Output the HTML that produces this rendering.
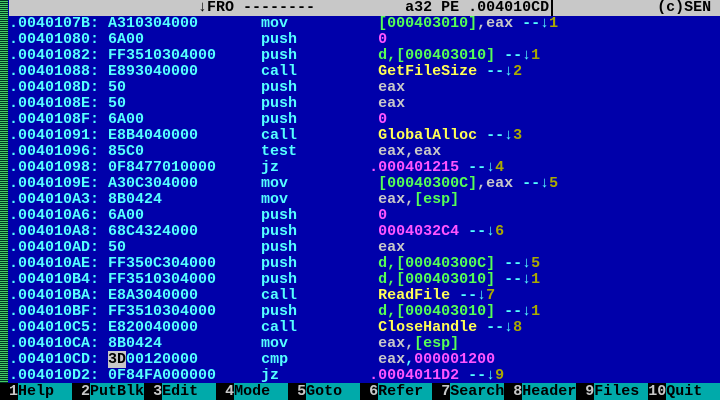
<!DOCTYPE html>
<html><head><meta charset="utf-8"><style>
html,body{margin:0;padding:0;width:720px;height:400px;overflow:hidden;background:#0000aa}
.r{position:absolute;left:0;width:720px;height:16px;white-space:pre;font:bold 15px/16px "Liberation Mono",monospace;color:#55ffff}
.c{color:#55ffff}.g{color:#55ff55}.w{color:#c8c8c8}.m{color:#ff55ff}.y{color:#ffff55}.o{color:#aaaa00}
.hl{background:#c8c8c8;color:#000}
#stripe{position:absolute;left:0;top:0;width:8px;height:384px;background:repeating-linear-gradient(0deg,#55ff55 0 1px,#004400 1px 2px);opacity:.8}
#top{position:absolute;left:9px;top:0;width:711px;height:16px;background:#c8c8c8}
#cur{position:absolute;left:551px;top:0;width:2px;height:16px;background:#000}
.k{background:#000;color:#c8c8c8}.f{background:#00aaaa;color:#000}
</style></head><body>
<div id="top"></div><div id="cur"></div><div id="stripe"></div>
<div class="r" style="top:0;color:#000">                      ↓FRO --------          a32 PE .004010CD            (c)SEN</div>
<div class="r" style="top:16px"> .0040107B: A310304000       mov          <span class="g">[000403010]</span><span class="w">,eax</span> --↓<span class="o">1</span></div>
<div class="r" style="top:32px"> .00401080: 6A00             push         <span class="m">0</span></div>
<div class="r" style="top:48px"> .00401082: FF3510304000     push         <span class="g">d,[000403010]</span> --↓<span class="o">1</span></div>
<div class="r" style="top:64px"> .00401088: E893040000       call         <span class="y">GetFileSize</span> --↓<span class="o">2</span></div>
<div class="r" style="top:80px"> .0040108D: 50               push         <span class="w">eax</span></div>
<div class="r" style="top:96px"> .0040108E: 50               push         <span class="w">eax</span></div>
<div class="r" style="top:112px"> .0040108F: 6A00             push         <span class="m">0</span></div>
<div class="r" style="top:128px"> .00401091: E8B4040000       call         <span class="y">GlobalAlloc</span> --↓<span class="o">3</span></div>
<div class="r" style="top:144px"> .00401096: 85C0             test         <span class="w">eax,eax</span></div>
<div class="r" style="top:160px"> .00401098: 0F8477010000     jz          <span class="m">.000401215</span> --↓<span class="o">4</span></div>
<div class="r" style="top:176px"> .0040109E: A30C304000       mov          <span class="g">[00040300C]</span><span class="w">,eax</span> --↓<span class="o">5</span></div>
<div class="r" style="top:192px"> .004010A3: 8B0424           mov          <span class="w">eax,</span><span class="g">[esp]</span></div>
<div class="r" style="top:208px"> .004010A6: 6A00             push         <span class="m">0</span></div>
<div class="r" style="top:224px"> .004010A8: 68C4324000       push         <span class="m">0004032C4</span> --↓<span class="o">6</span></div>
<div class="r" style="top:240px"> .004010AD: 50               push         <span class="w">eax</span></div>
<div class="r" style="top:256px"> .004010AE: FF350C304000     push         <span class="g">d,[00040300C]</span> --↓<span class="o">5</span></div>
<div class="r" style="top:272px"> .004010B4: FF3510304000     push         <span class="g">d,[000403010]</span> --↓<span class="o">1</span></div>
<div class="r" style="top:288px"> .004010BA: E8A3040000       call         <span class="y">ReadFile</span> --↓<span class="o">7</span></div>
<div class="r" style="top:304px"> .004010BF: FF3510304000     push         <span class="g">d,[000403010]</span> --↓<span class="o">1</span></div>
<div class="r" style="top:320px"> .004010C5: E820040000       call         <span class="y">CloseHandle</span> --↓<span class="o">8</span></div>
<div class="r" style="top:336px"> .004010CA: 8B0424           mov          <span class="w">eax,</span><span class="g">[esp]</span></div>
<div class="r" style="top:352px"> .004010CD: <span class="hl">3D</span>00120000       cmp          <span class="w">eax</span>,<span class="m">000001200</span></div>
<div class="r" style="top:368px"> .004010D2: 0F84FA000000     jz          <span class="m">.0004011D2</span> --↓<span class="o">9</span></div>
<div class="r" style="top:384px"><span class="k"> 1</span><span class="f">Help  </span><span class="k"> 2</span><span class="f">PutBlk</span><span class="k"> 3</span><span class="f">Edit  </span><span class="k"> 4</span><span class="f">Mode  </span><span class="k"> 5</span><span class="f">Goto  </span><span class="k"> 6</span><span class="f">Refer </span><span class="k"> 7</span><span class="f">Search</span><span class="k"> 8</span><span class="f">Header</span><span class="k"> 9</span><span class="f">Files </span><span class="k">10</span><span class="f">Quit  </span></div>
</body></html>
